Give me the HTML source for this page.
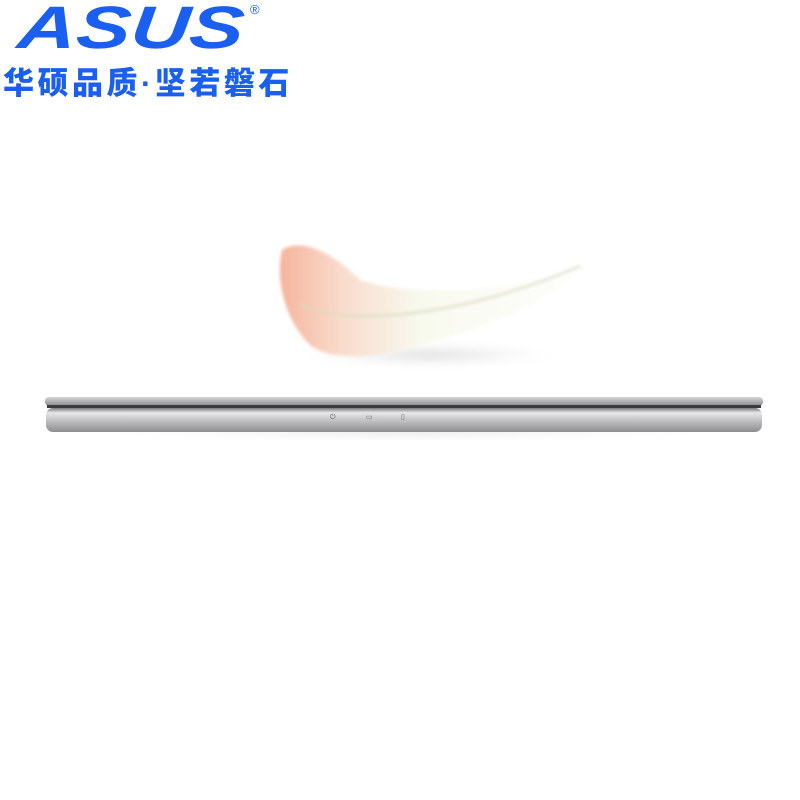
<!DOCTYPE html>
<html><head><meta charset="utf-8"><style>
html,body{margin:0;padding:0;background:#fff;width:800px;height:800px;overflow:hidden;position:relative}
.t{position:absolute;left:3px;top:66px;font-family:"Liberation Sans","Noto Sans CJK SC",sans-serif;font-weight:900;font-size:31px;color:#1a5ff0;letter-spacing:3.5px;white-space:nowrap;line-height:36px}
</style></head><body>
<svg width="800" height="800" style="position:absolute;left:0;top:0">
<defs>
<linearGradient id="fp" x1="0" y1="0" x2="1" y2="0">
<stop offset="0" stop-color="#f6b49c"/><stop offset="0.2" stop-color="#f9dccd"/><stop offset="0.45" stop-color="#f8f9ee"/><stop offset="1" stop-color="#fbfcf6" stop-opacity="0.3"/>
</linearGradient>
<radialGradient id="sh" cx="0.5" cy="0.5" r="0.5"><stop offset="0" stop-color="#dcdcdc"/><stop offset="1" stop-color="#fff" stop-opacity="0"/></radialGradient>
<linearGradient id="lid" x1="0" y1="0" x2="0" y2="1"><stop offset="0" stop-color="#d8d8da"/><stop offset="0.5" stop-color="#b0b0b3"/><stop offset="1" stop-color="#8a8a8d"/></linearGradient>
<linearGradient id="bd" x1="0" y1="0" x2="0" y2="1"><stop offset="0" stop-color="#7a7a7d"/><stop offset="0.2" stop-color="#e8e8ea"/><stop offset="0.5" stop-color="#c4c4c7"/><stop offset="1" stop-color="#8e8e91"/></linearGradient>
<filter id="bl"><feGaussianBlur stdDeviation="4"/></filter>
<filter id="bl2"><feGaussianBlur stdDeviation="1.5"/></filter>
</defs>
<text x="17" y="48" font-family="Liberation Sans,sans-serif" font-weight="900" font-style="italic" font-size="60" fill="#1a5ff0" textLength="226" lengthAdjust="spacingAndGlyphs" transform="skewX(-6) translate(4,0)">ASUS</text>
<text x="250" y="14" font-size="13" fill="#1a5ff0" font-family="Liberation Sans,sans-serif">®</text>
<ellipse cx="430" cy="355" rx="150" ry="14" fill="url(#sh)" filter="url(#bl)"/>
<g filter="url(#bl2)">
<path d="M282 250 C300 238 330 250 360 280 C420 300 520 290 590 262 C560 300 480 330 420 345 C370 360 330 360 310 345 C285 320 275 280 282 250Z" fill="url(#fp)"/>
<path d="M300 305 C360 330 480 310 580 266" stroke="#d9dcc0" stroke-width="2" fill="none"/>
</g>
<ellipse cx="405" cy="432" rx="370" ry="7" fill="url(#sh)" filter="url(#bl)"/>
<rect x="45" y="397" width="718" height="9" rx="4" fill="url(#lid)"/>
<rect x="47" y="405" width="714" height="3" fill="#3a3a3c"/>
<rect x="46" y="408" width="716" height="24" rx="7" fill="url(#bd)"/>
<text x="330" y="419" font-size="7" fill="#666" font-family="Liberation Sans,sans-serif">⏻</text>
<text x="366" y="419" font-size="7" fill="#666" font-family="Liberation Sans,sans-serif">▭</text>
<text x="401" y="419" font-size="7" fill="#666" font-family="Liberation Sans,sans-serif">▯</text>
</svg>
<div class="t">华硕品质·坚若磐石</div>
</body></html>
